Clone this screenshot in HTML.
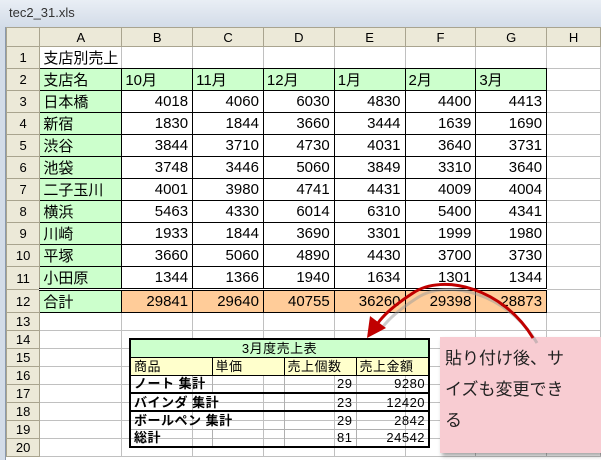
<!DOCTYPE html>
<html><head><meta charset="utf-8">
<style>
*{margin:0;padding:0;box-sizing:border-box}
body{width:601px;height:460px;overflow:hidden;background:#fff;position:relative;font-family:"Liberation Sans","Noto Sans CJK JP",sans-serif}
#title{position:absolute;left:0;top:0;width:601px;height:27px;background:linear-gradient(#e9eef5,#d3dce8);font-size:13px;color:#333;padding:5px 0 0 9px}
#frame{position:absolute;left:0;top:27px;width:6px;height:433px;background:#d3dce8;border-right:1px solid #8a99ad}
table.s{position:absolute;left:6px;top:27px;border-collapse:collapse;table-layout:fixed;font-size:15px}
table.s td{border:1px solid #c0c0c0;padding:0 3px;white-space:nowrap;overflow:hidden;color:#000}
table.s td.h{background:#ece9d8;text-align:center;border-color:#a9a48f;font-size:13px;font-weight:normal}
table.s td.g{background:#ccffcc;border:1px solid #000}
table.s td.n{text-align:right;border:1px solid #000;padding-right:4px}
table.s td.o{background:#ffcc99;text-align:right;border:1px solid #000;padding-right:4px}
tr.big td{height:22px}
tr.sm td{height:18px}
tr.r12 td{border-top:3px double #000 !important}
table.p{position:absolute;left:129px;top:338px;width:299px;border-collapse:collapse;table-layout:fixed;font-size:13px;line-height:15px;letter-spacing:.5px;font-family:"Liberation Sans","Noto Sans CJK JP",sans-serif;border:2px solid #000}
table.p td{height:18px;padding:0 3px;border:1px solid #b0b0b0;white-space:nowrap;overflow:hidden}
table.p .t{background:#ccffcc;text-align:center;border-bottom:1px solid #000}
table.p .y{background:#ffffcc;border:1px solid #000}
table.p .b{font-weight:bold}
table.p .r{text-align:right}
table.p tr.k td{border-bottom:2px solid #000}
#note{position:absolute;left:440px;top:337px;width:161px;height:116px;background:#f8ccd2;box-shadow:2px 3px 4px rgba(0,0,0,.35);font-size:17px;line-height:31px;padding:6px 0 0 5px;color:#222}
</style></head><body>
<div id="title">tec2_31.xls</div>
<div id="frame"></div>
<table class="s">
<colgroup><col style="width:34px"><col style="width:72px"><col style="width:72px"><col style="width:72px"><col style="width:72px"><col style="width:72px"><col style="width:72px"><col style="width:72px"><col style="width:56px"></colgroup>
<tr style="height:19px"><td class="h"></td><td class="h">A</td><td class="h">B</td><td class="h">C</td><td class="h">D</td><td class="h">E</td><td class="h">F</td><td class="h">G</td><td class="h">H</td></tr>
<tr class="big"><td class="h">1</td><td style="border-bottom:1px solid #000">支店別売上</td><td style="border-bottom:1px solid #000"></td><td style="border-bottom:1px solid #000"></td><td style="border-bottom:1px solid #000"></td><td style="border-bottom:1px solid #000"></td><td style="border-bottom:1px solid #000"></td><td style="border-bottom:1px solid #000"></td><td></td></tr>
<tr class="big"><td class="h">2</td><td class="g">支店名</td><td class="g">10月</td><td class="g">11月</td><td class="g">12月</td><td class="g">1月</td><td class="g">2月</td><td class="g">3月</td><td></td></tr>
<tr class="big"><td class="h">3</td><td class="g">日本橋</td><td class="n">4018</td><td class="n">4060</td><td class="n">6030</td><td class="n">4830</td><td class="n">4400</td><td class="n">4413</td><td></td></tr>
<tr class="big"><td class="h">4</td><td class="g">新宿</td><td class="n">1830</td><td class="n">1844</td><td class="n">3660</td><td class="n">3444</td><td class="n">1639</td><td class="n">1690</td><td></td></tr>
<tr class="big"><td class="h">5</td><td class="g">渋谷</td><td class="n">3844</td><td class="n">3710</td><td class="n">4730</td><td class="n">4031</td><td class="n">3640</td><td class="n">3731</td><td></td></tr>
<tr class="big"><td class="h">6</td><td class="g">池袋</td><td class="n">3748</td><td class="n">3446</td><td class="n">5060</td><td class="n">3849</td><td class="n">3310</td><td class="n">3640</td><td></td></tr>
<tr class="big"><td class="h">7</td><td class="g">二子玉川</td><td class="n">4001</td><td class="n">3980</td><td class="n">4741</td><td class="n">4431</td><td class="n">4009</td><td class="n">4004</td><td></td></tr>
<tr class="big"><td class="h">8</td><td class="g">横浜</td><td class="n">5463</td><td class="n">4330</td><td class="n">6014</td><td class="n">6310</td><td class="n">5400</td><td class="n">4341</td><td></td></tr>
<tr class="big"><td class="h">9</td><td class="g">川崎</td><td class="n">1933</td><td class="n">1844</td><td class="n">3690</td><td class="n">3301</td><td class="n">1999</td><td class="n">1980</td><td></td></tr>
<tr class="big"><td class="h">10</td><td class="g">平塚</td><td class="n">3660</td><td class="n">5060</td><td class="n">4890</td><td class="n">4430</td><td class="n">3700</td><td class="n">3730</td><td></td></tr>
<tr class="big"><td class="h">11</td><td class="g">小田原</td><td class="n">1344</td><td class="n">1366</td><td class="n">1940</td><td class="n">1634</td><td class="n">1301</td><td class="n">1344</td><td></td></tr>
<tr class="big r12"><td class="h" style="border-top:1px solid #a9a48f !important">12</td><td class="g">合計</td><td class="o">29841</td><td class="o">29640</td><td class="o">40755</td><td class="o">36260</td><td class="o">29398</td><td class="o">28873</td><td style="border-top:1px solid #c0c0c0 !important"></td></tr>
<tr class="sm"><td class="h">13</td><td></td><td></td><td></td><td></td><td></td><td></td><td></td><td></td></tr>
<tr class="sm"><td class="h">14</td><td></td><td></td><td></td><td></td><td></td><td></td><td></td><td></td></tr>
<tr class="sm"><td class="h">15</td><td></td><td></td><td></td><td></td><td></td><td></td><td></td><td></td></tr>
<tr class="sm"><td class="h">16</td><td></td><td></td><td></td><td></td><td></td><td></td><td></td><td></td></tr>
<tr class="sm"><td class="h">17</td><td></td><td></td><td></td><td></td><td></td><td></td><td></td><td></td></tr>
<tr class="sm"><td class="h">18</td><td></td><td></td><td></td><td></td><td></td><td></td><td></td><td></td></tr>
<tr class="sm"><td class="h">19</td><td></td><td></td><td></td><td></td><td></td><td></td><td></td><td></td></tr>
<tr class="sm"><td class="h">20</td><td></td><td></td><td></td><td></td><td></td><td></td><td></td><td></td></tr>
</table>
<table class="p">
<colgroup><col style="width:82px"><col style="width:72px"><col style="width:72px"><col style="width:73px"></colgroup>
<tr><td class="t" colspan="4">3月度売上表</td></tr>
<tr><td class="y">商品</td><td class="y">単価</td><td class="y">売上個数</td><td class="y">売上金額</td></tr>
<tr class="k"><td class="b">ノート 集計</td><td></td><td class="r">29</td><td class="r">9280</td></tr>
<tr class="k"><td class="b" colspan="2">バインダ 集計</td><td class="r">23</td><td class="r">12420</td></tr>
<tr><td class="b" colspan="2">ボールペン 集計</td><td class="r">29</td><td class="r">2842</td></tr>
<tr><td class="b">総計</td><td></td><td class="r">81</td><td class="r">24542</td></tr>
</table>
<div id="note">貼り付け後、サ<br>イズも変更でき<br>る</div>
<svg style="position:absolute;left:0;top:0" width="601" height="460">
<path d="M535 340 C505 290 445 275 415 295 C395 308 385 318 380 325" fill="none" stroke="#999" stroke-width="3" opacity=".5" transform="translate(2,3)"/>
<path d="M533 338 C503 288 443 273 413 293 C393 306 383 316 378 323" fill="none" stroke="#c00000" stroke-width="3"/>
<polygon points="367,338 370,316 386,328" fill="#c00000"/>
</svg>
</body></html>
